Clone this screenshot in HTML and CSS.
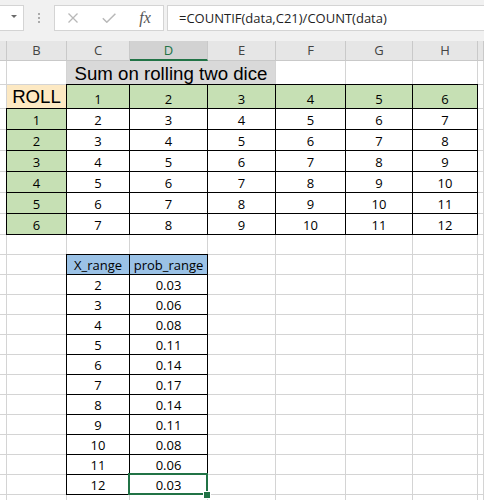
FILE: index.html
```html
<!DOCTYPE html>
<html>
<head>
<meta charset="utf-8">
<title>Sum on rolling two dice</title>
<link rel="stylesheet" href="styles.css">
</head>
<body>
<div class="toolbar">
  <div class="namebox"><span class="caret"></span></div>
  <div class="dots"></div>
  <div class="btns">
    <span class="btn"><svg width="10" height="10" viewBox="0 0 10 10"><path d="M0.5 0.5L9.5 9.5M9.5 0.5L0.5 9.5" stroke="#b8b8b8" stroke-width="1.3" fill="none"/></svg></span>
    <span class="btn"><svg width="14" height="10" viewBox="0 0 14 10"><path d="M0.8 5.2L4.8 9.2L13.4 0.8" stroke="#b8b8b8" stroke-width="1.5" fill="none"/></svg></span>
    <span class="btn fx">fx</span>
  </div>
  <div class="formula">=COUNTIF(data,C21)/COUNT(data)</div>
</div>
<div class="sheet">
  <div class="h"></div><div class="h">B</div><div class="h">C</div><div class="h hs">D</div><div class="h">E</div><div class="h">F</div><div class="h">G</div><div class="h">H</div><div class="h"></div>

  <div class="c"></div><div class="c"></div><div class="c title">Sum on rolling two dice</div><div class="c"></div><div class="c"></div><div class="c"></div><div class="c"></div>

  <div class="c"></div><div class="c roll">ROLL</div><div class="c k g">1</div><div class="c k g">2</div><div class="c k g">3</div><div class="c k g">4</div><div class="c k g">5</div><div class="c k g">6</div><div class="c"></div>

  <div class="c"></div><div class="c k g">1</div><div class="c k">2</div><div class="c k">3</div><div class="c k">4</div><div class="c k">5</div><div class="c k">6</div><div class="c k">7</div><div class="c"></div>
  <div class="c"></div><div class="c k g">2</div><div class="c k">3</div><div class="c k">4</div><div class="c k">5</div><div class="c k">6</div><div class="c k">7</div><div class="c k">8</div><div class="c"></div>
  <div class="c"></div><div class="c k g">3</div><div class="c k">4</div><div class="c k">5</div><div class="c k">6</div><div class="c k">7</div><div class="c k">8</div><div class="c k">9</div><div class="c"></div>
  <div class="c"></div><div class="c k g">4</div><div class="c k">5</div><div class="c k">6</div><div class="c k">7</div><div class="c k">8</div><div class="c k">9</div><div class="c k">10</div><div class="c"></div>
  <div class="c"></div><div class="c k g">5</div><div class="c k">6</div><div class="c k">7</div><div class="c k">8</div><div class="c k">9</div><div class="c k">10</div><div class="c k">11</div><div class="c"></div>
  <div class="c"></div><div class="c k g">6</div><div class="c k">7</div><div class="c k">8</div><div class="c k">9</div><div class="c k">10</div><div class="c k">11</div><div class="c k">12</div><div class="c"></div>

  <div class="c"></div><div class="c"></div><div class="c"></div><div class="c"></div><div class="c"></div><div class="c"></div><div class="c"></div><div class="c"></div><div class="c"></div>

  <div class="c"></div><div class="c"></div><div class="c k bl">X_range</div><div class="c k bl">prob_range</div><div class="c"></div><div class="c"></div><div class="c"></div><div class="c"></div><div class="c"></div>

  <div class="c"></div><div class="c"></div><div class="c k">2</div><div class="c k">0.03</div><div class="c"></div><div class="c"></div><div class="c"></div><div class="c"></div><div class="c"></div>
  <div class="c"></div><div class="c"></div><div class="c k">3</div><div class="c k">0.06</div><div class="c"></div><div class="c"></div><div class="c"></div><div class="c"></div><div class="c"></div>
  <div class="c"></div><div class="c"></div><div class="c k">4</div><div class="c k">0.08</div><div class="c"></div><div class="c"></div><div class="c"></div><div class="c"></div><div class="c"></div>
  <div class="c"></div><div class="c"></div><div class="c k">5</div><div class="c k">0.11</div><div class="c"></div><div class="c"></div><div class="c"></div><div class="c"></div><div class="c"></div>
  <div class="c"></div><div class="c"></div><div class="c k">6</div><div class="c k">0.14</div><div class="c"></div><div class="c"></div><div class="c"></div><div class="c"></div><div class="c"></div>
  <div class="c"></div><div class="c"></div><div class="c k">7</div><div class="c k">0.17</div><div class="c"></div><div class="c"></div><div class="c"></div><div class="c"></div><div class="c"></div>
  <div class="c"></div><div class="c"></div><div class="c k">8</div><div class="c k">0.14</div><div class="c"></div><div class="c"></div><div class="c"></div><div class="c"></div><div class="c"></div>
  <div class="c"></div><div class="c"></div><div class="c k">9</div><div class="c k">0.11</div><div class="c"></div><div class="c"></div><div class="c"></div><div class="c"></div><div class="c"></div>
  <div class="c"></div><div class="c"></div><div class="c k">10</div><div class="c k">0.08</div><div class="c"></div><div class="c"></div><div class="c"></div><div class="c"></div><div class="c"></div>
  <div class="c"></div><div class="c"></div><div class="c k">11</div><div class="c k">0.06</div><div class="c"></div><div class="c"></div><div class="c"></div><div class="c"></div><div class="c"></div>
  <div class="c"></div><div class="c"></div><div class="c k">12</div><div class="c k active">0.03<span class="sel"><span class="handle"></span></span></div><div class="c"></div><div class="c"></div><div class="c"></div><div class="c"></div><div class="c"></div>

  <div class="c"></div><div class="c"></div><div class="c"></div><div class="c"></div><div class="c"></div><div class="c"></div><div class="c"></div><div class="c"></div><div class="c"></div>
</div>
</body>
</html>
```

FILE: styles.css
```css
html, body {
  margin: 0;
  padding: 0;
}

body {
  width: 484px;
  height: 500px;
  overflow: hidden;
  background: #ffffff;
  font-family: "Open Sans", sans-serif;
  color: #000000;
}

/* ---------- formula bar ---------- */
.toolbar {
  height: 41px;
  box-sizing: border-box;
  padding-top: 5px;
  background: #f1f1f1;
  display: flex;
  align-items: flex-start;
}

.namebox {
  width: 24px;
  height: 26px;
  box-sizing: border-box;
  background: #ffffff;
  border: 1px solid #d4d4d4;
  border-left: none;
  display: flex;
  justify-content: flex-end;
  align-items: flex-start;
  padding: 9px 6px 0 0;
}

.caret {
  width: 0;
  height: 0;
  border-left: 3px solid transparent;
  border-right: 3px solid transparent;
  border-top: 3px solid #6a6a6a;
}

.dots {
  width: 2px;
  height: 2px;
  margin: 8px 0 0 14px;
  background: #ababab;
  box-shadow: 0 4px 0 #ababab, 0 8px 0 #ababab;
}

.btns {
  width: 110px;
  height: 26px;
  box-sizing: border-box;
  margin-left: 14px;
  background: #ffffff;
  border: 1px solid #d4d4d4;
  display: flex;
}

.btn {
  flex: 1;
  display: flex;
  align-items: center;
  justify-content: center;
}

.btn svg {
  display: block;
}

.fx {
  font-family: "Liberation Serif", serif;
  font-style: italic;
  font-size: 16px;
  color: #555555;
  padding-bottom: 1px;
}

.formula {
  flex: 1;
  height: 26px;
  box-sizing: border-box;
  margin-left: 3px;
  padding-left: 11px;
  background: #ffffff;
  border: 1px solid #d4d4d4;
  border-right: none;
  font-size: 13px;
  line-height: 24px;
  color: #1e1e1e;
  white-space: nowrap;
}

/* ---------- grid ---------- */
.sheet {
  display: grid;
  grid-template-columns: 7px 60px 63px 78px 68px 70px 67px 65px 6px;
  grid-template-rows: 20px 24px 24px repeat(6, 21px) repeat(14, 20px);
}

.h,
.c {
  box-sizing: border-box;
  display: flex;
  align-items: flex-end;
  justify-content: center;
  font-size: 13px;
  line-height: 16px;
  white-space: nowrap;
  overflow: visible;
}

.h {
  background: #e6e6e6;
  border-right: 1px solid #c9c9c9;
  border-bottom: 1px solid #c9c9c9;
  color: #444444;
  padding-bottom: 2px;
}

.hs {
  background: #d2d2d2;
  color: #217346;
  border-bottom: 2px solid #217346;
  padding-bottom: 1px;
}

.c {
  background: #ffffff;
  border-right: 1px solid #d4d4d4;
  border-bottom: 1px solid #d4d4d4;
  padding-bottom: 1px;
}

.k {
  border-right-color: #000000;
  border-bottom-color: #000000;
  box-shadow: -1px -1px 0 #000000, 0 -1px 0 #000000, -1px 0 0 #000000;
}

.g {
  background: #c6e0b4;
}

.bl {
  background: #9bc2e6;
}

.title {
  grid-column: span 3;
  background: #d9d9d9;
  font-family: "Liberation Sans", Arial, sans-serif;
  font-size: 18.67px;
  line-height: 21px;
  padding-bottom: 0;
}

.roll {
  background: #fde9c3;
  font-family: "Liberation Sans", Arial, sans-serif;
  font-size: 18.67px;
  line-height: 21px;
  padding-bottom: 1px;
}

.active {
  position: relative;
}

.sel {
  position: absolute;
  left: -2px;
  top: -2px;
  right: -1px;
  bottom: -1px;
  border: 2px solid #217346;
}

.handle {
  position: absolute;
  right: -4px;
  bottom: -5px;
  width: 6px;
  height: 6px;
  background: #217346;
  box-shadow: 0 0 0 1px #ffffff;
}
```
